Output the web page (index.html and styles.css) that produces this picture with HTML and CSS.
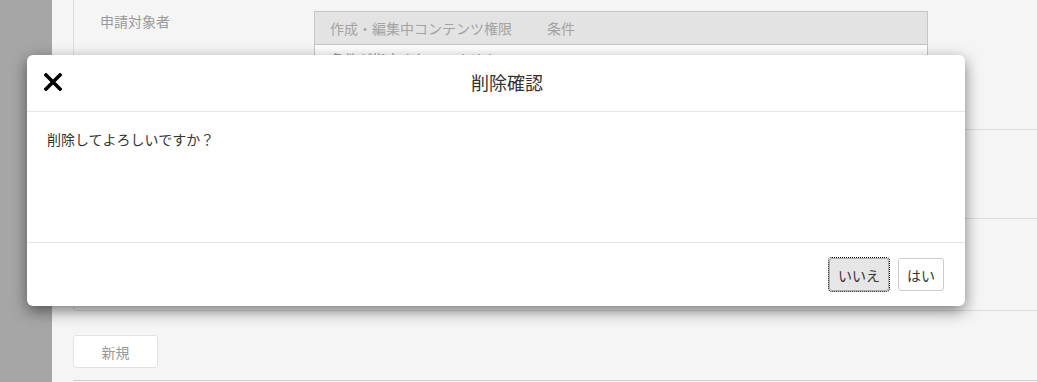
FILE: index.html
```html
<!DOCTYPE html>
<html lang="ja">
<head>
    <meta charset="UTF-8">
    <title>削除確認</title>
    <link rel="stylesheet" href="styles.css">
</head>
<body>
    <div class="page">
        <div class="sidebar"></div>
        <div class="main">
            <div class="panel">
                <div class="row row-first">
                    <div class="row-label">申請対象者</div>
                    <div class="row-body">
                        <table class="cond-table">
                            <thead>
                                <tr>
                                    <th class="col-perm">作成・編集中コンテンツ権限</th>
                                    <th>条件</th>
                                </tr>
                            </thead>
                            <tbody>
                                <tr>
                                    <td colspan="2">条件が指定されていません</td>
                                </tr>
                            </tbody>
                        </table>
                    </div>
                </div>
                <div class="row row-second"></div>
                <div class="row row-third"></div>
            </div>
            <button class="btn-new" type="button">新規</button>
            <div class="bottom-line"></div>
        </div>
    </div>

    <div class="modal">
        <div class="modal-header">
            <button class="modal-close" type="button">
                <svg width="18" height="18" viewBox="0 0 18 18">
                    <path d="M2 2 L16 16 M16 2 L2 16" stroke="#000" stroke-width="3.6" stroke-linecap="square"/>
                </svg>
            </button>
            <h4 class="modal-title">削除確認</h4>
        </div>
        <div class="modal-body">
            <p>削除してよろしいですか？</p>
        </div>
        <div class="modal-footer">
            <button class="btn btn-focus" type="button">いいえ</button>
            <button class="btn" type="button">はい</button>
        </div>
    </div>
</body>
</html>
```

FILE: styles.css
```css
body {
    margin: 0;
    font-family: "Noto Sans CJK JP", "Noto Sans", sans-serif;
    font-size: 14px;
    color: #333;
    background: #f5f5f5;
    overflow: hidden;
}
.page {
    display: flex;
    height: 382px;
}
.sidebar {
    width: 52px;
    flex-shrink: 0;
    background: #a6a6a6;
}
.main {
    flex: 1;
    padding-left: 21px;
    overflow: hidden;
}
.panel {
    width: 1000px;
    height: 312px;
    margin-top: -1px;
    border: 1px solid #dcdcdc;
    border-right: none;
    border-radius: 0 0 0 4px;
    box-sizing: border-box;
}
.row {
    display: flex;
    border-bottom: 1px solid #dcdcdc;
    box-sizing: border-box;
}
.row-first {
    height: 130px;
}
.row-second {
    height: 89px;
}
.row-third {
    border-bottom: none;
}
.row-label {
    width: 240px;
    box-sizing: border-box;
    padding: 11px 0 0 26px;
    color: #999;
}
.row-body {
    padding-top: 11px;
}
.cond-table {
    width: 614px;
    border-collapse: collapse;
    background: #fff;
    border: 1px solid #c6c6c6;
}
.cond-table th {
    height: 32px;
    padding: 0 0 0 15px;
    background: #e3e3e3;
    border-bottom: 1px solid #c6c6c6;
    color: #a3a3a3;
    font-weight: normal;
    text-align: left;
}
.cond-table .col-perm {
    width: 202px;
}
.cond-table td {
    padding: 4px 15px;
    color: #999;
}
.btn-new {
    display: block;
    width: 85px;
    height: 33px;
    margin-top: 24px;
    background: #fff;
    border: 1px solid #e3e3e3;
    border-radius: 3px;
    color: #999;
    font-family: inherit;
    font-size: 14px;
}
.bottom-line {
    margin-top: 12px;
    border-top: 1px solid #cfcfcf;
}

.modal {
    position: absolute;
    left: 27px;
    top: 55px;
    width: 938px;
    height: 251px;
    background: #fff;
    border-radius: 6px;
    box-shadow: 0 5px 15px rgba(0, 0, 0, 0.5);
    display: flex;
    flex-direction: column;
}
.modal-header {
    display: flex;
    align-items: center;
    height: 56px;
    padding: 0 13px 0 17px;
    border-bottom: 1px solid #e5e5e5;
}
.modal-close {
    padding: 0;
    border: none;
    background: none;
    width: 18px;
    height: 18px;
    margin-top: -2px;
}
.modal-title {
    flex: 1;
    margin: 0 0 2px;
    text-align: center;
    font-size: 18px;
    font-weight: normal;
    color: #333;
}
.modal-body {
    height: 130px;
    padding: 0 20px;
}
.modal-body p {
    margin: 17px 0 0;
}
.modal-footer {
    display: flex;
    justify-content: flex-end;
    gap: 9px;
    padding: 15px 21px 0 0;
    border-top: 1px solid #e5e5e5;
    flex: 1;
}
.btn {
    height: 33px;
    padding: 0 8px;
    background: #fff;
    border: 1px solid #ccc;
    border-radius: 3px;
    color: #333;
    font-family: inherit;
    font-size: 14px;
}
.btn-focus {
    background: #e6e6e6;
    border-color: #adadad;
    outline: 1px dotted #000;
}
```
